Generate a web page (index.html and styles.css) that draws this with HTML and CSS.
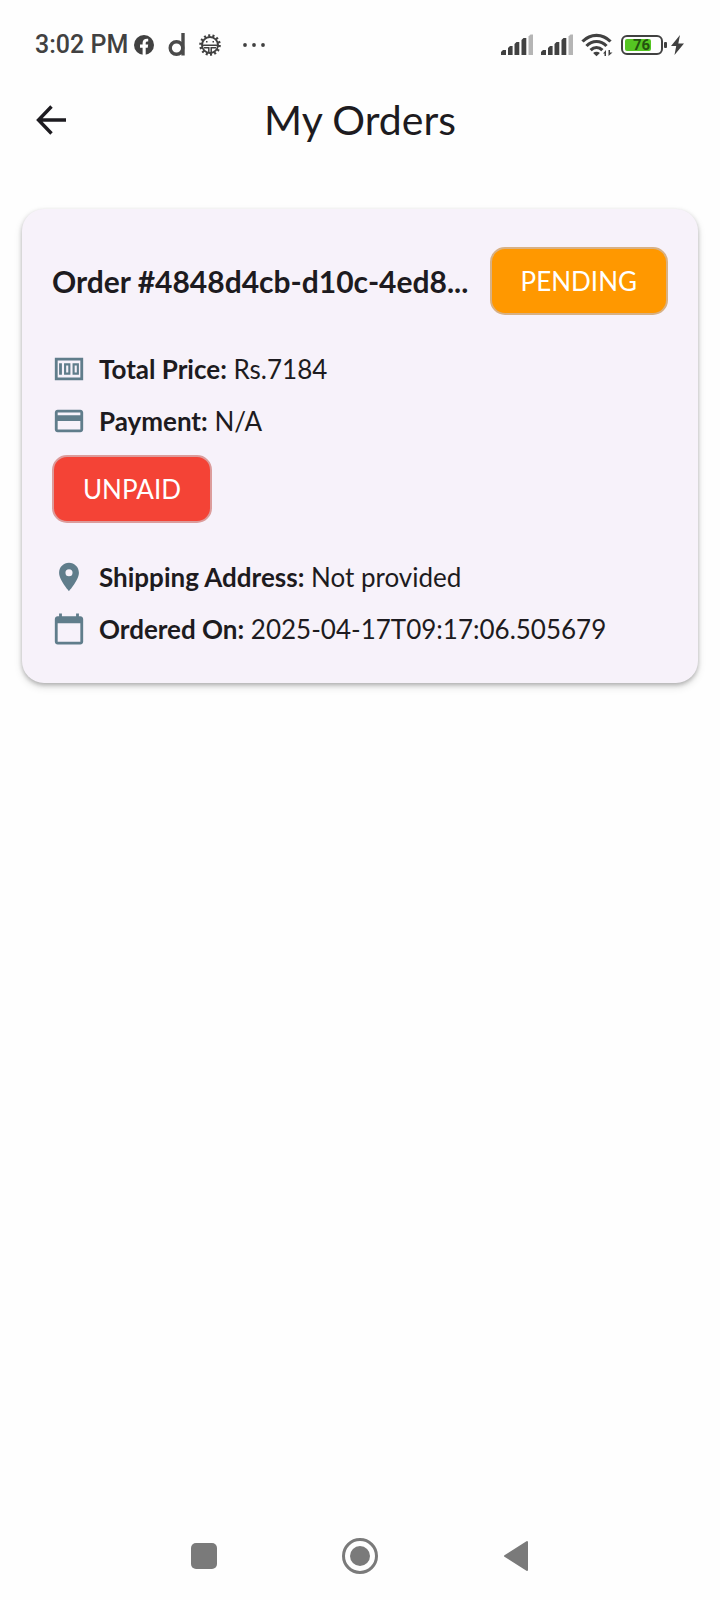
FILE: index.html
```html
<!DOCTYPE html>
<html lang="en">
<head>
<meta charset="utf-8">
<meta name="viewport" content="width=device-width, initial-scale=1">
<title>My Orders</title>
<link rel="stylesheet" href="styles.css">
</head>
<body>
<div class="screen">
  <div class="status-bar">
    <div class="status-left">
      <span class="clock">3:02 PM</span>
      <svg class="icon-fb" viewBox="0 0 20 20" width="20" height="20" aria-hidden="true"><circle cx="10" cy="10" r="10" fill="#414141"/><path d="M8.600 20v-7.200H6V9.600h2.600V8c0-3.100 2-4.600 5.600-4.200v2.700c-1.900-.1-2.500.3-2.500 1.700v1.400h2.500l-.5 3.200h-2V20z" fill="#fff"/></svg>
      <svg class="icon-d" viewBox="0 0 18 26" width="18" height="26" aria-hidden="true" fill="none" stroke="#4a4a4a" stroke-width="3.400"><circle cx="8.500" cy="16" r="6.300"/><path d="M15 1v22.500"/></svg>
      <svg class="icon-gear" viewBox="0 0 24 24" width="24" height="24" aria-hidden="true" fill="none" stroke="#414141"><circle cx="12" cy="12" r="9.300" stroke-width="3" stroke-dasharray="2 2.174"/><circle cx="12" cy="12" r="8" stroke-width="1.900"/><path d="M4 12.200h16M6 14.800h4.800v5.500M18 14.800h-4.800v5.500" stroke-width="1.500"/><path d="M8 8.700h1.500M14.500 8.700H16" stroke-width="1.500"/></svg>
      <svg class="icon-more" viewBox="0 0 24 6" width="24" height="6" aria-hidden="true" fill="#414141"><circle cx="3" cy="3" r="1.900"/><circle cx="12" cy="3" r="1.900"/><circle cx="21" cy="3" r="1.900"/></svg>
    </div>
    <div class="status-right">
      <svg viewBox="0 0 32 21" width="32" height="21" aria-hidden="true" fill="#414141"><path d="M0 21v-3l2-2h3v5zM7 21v-7l2-2h2.600v9zM13.500 21V10l2-2h2.800v13zM20.500 21V6l2-2h2.800v17z"/><path d="M27.500 21V2.500l2-2H32V21z" fill="#b5b5b5"/></svg>
      <svg viewBox="0 0 32 21" width="32" height="21" aria-hidden="true" fill="#414141"><path d="M0 21v-3l2-2h3v5zM7 21v-7l2-2h2.600v9zM13.500 21V10l2-2h2.800v13zM20.500 21V6l2-2h2.800v17z"/><path d="M27.500 21V2.500l2-2H32V21z" fill="#b5b5b5"/></svg>
      <svg viewBox="0 0 32 24" width="32" height="24" aria-hidden="true"><g fill="none" stroke="#414141" stroke-width="3.200"><path d="M1.500 8.500C9.500.3 21.500.3 29.500 8.500"/><path d="M5.500 13c5.800-6 14.200-6 20 0"/><path d="M9.600 17.200c3.500-3.500 8.300-3.500 11.800 0"/></g><path d="M15.500 23.300l-3.400-3.300c1.900-1.700 4.900-1.700 6.800 0z" fill="#414141"/><path d="M25 17v6h-1.500v-2.500H22zM27.500 23v-6H29v2.500h2.500z" fill="#414141"/></svg>
      <span class="battery"><span class="battery-level">76</span></span>
      <svg class="icon-bolt" viewBox="0 0 13 20" width="13" height="20" aria-hidden="true"><path d="M9 0L0 11h5.200L3.500 20 13 8.600H7.300z" fill="#414141"/></svg>
    </div>
  </div>

  <header class="app-bar">
    <button class="back" type="button" aria-label="Back"><svg viewBox="0 0 30 30" width="30" height="30" fill="none" stroke="#1d1b20" stroke-width="3.400"><path d="M15.500 1.500L2.500 15l13 13.500M2.500 15H30"/></svg></button>
    <h1 class="title">My Orders</h1>
  </header>

  <main class="content">
    <article class="card">
      <div class="card-head">
        <h2 class="order-id">Order #4848d4cb-d10c-4ed8...</h2>
        <span class="chip chip-pending">PENDING</span>
      </div>
      <div class="details">
        <p class="row"><svg class="row-icon" viewBox="0 0 24 24" aria-hidden="true"><path d="M2 4v16h20V4zM4 6h16v12H4z" fill-rule="evenodd"/><path d="M5 8h2v8H5zM8.500 8h4.500v8H8.500zm1.500 1.500v5h1.500v-5zM14.500 8H19v8h-4.500zm1.500 1.500v5h1.500v-5z" fill-rule="evenodd"/></svg><span><b>Total Price:</b> Rs.7184</span></p>
        <p class="row"><svg class="row-icon" viewBox="0 0 24 24" aria-hidden="true"><path d="M20 4H4c-1.110 0-1.990.890-1.990 2L2 18c0 1.110.890 2 2 2h16c1.110 0 2-.890 2-2V6c0-1.110-.890-2-2-2zm0 14H4v-6h16v6zm0-10H4V6h16v2z"/></svg><span><b>Payment:</b> N/A</span></p>
        <span class="chip chip-unpaid">UNPAID</span>
      </div>
      <div class="details">
        <p class="row"><svg class="row-icon" viewBox="0 0 24 24" aria-hidden="true"><path d="M12 2C8.130 2 5 5.130 5 9c0 5.250 7 13 7 13s7-7.750 7-13c0-3.870-3.130-7-7-7zm0 9.500a2.500 2.500 0 010-5 2.500 2.500 0 010 5z"/></svg><span><b>Shipping Address:</b> Not provided</span></p>
        <p class="row"><svg class="row-icon" viewBox="0 0 24 24" aria-hidden="true"><path d="M20 3h-1V1h-2v2H7V1H5v2H4c-1.100 0-2 .900-2 2v16c0 1.100.900 2 2 2h16c1.100 0 2-.900 2-2V5c0-1.100-.900-2-2-2zm0 18H4V8h16v13z"/></svg><span><b>Ordered On:</b> 2025-04-17T09:17:06.505679</span></p>
      </div>
    </article>
  </main>

  <nav class="nav-bar" aria-label="System">
    <button class="nav-button" type="button" aria-label="Recent apps"><svg viewBox="0 0 36 36" width="36" height="36"><rect x="5" y="5" width="26" height="26" rx="5" fill="#7a7a7a"/></svg></button>
    <button class="nav-button" type="button" aria-label="Home"><svg viewBox="0 0 36 36" width="36" height="36"><circle cx="18" cy="18" r="16.500" fill="none" stroke="#7a7a7a" stroke-width="3"/><circle cx="18" cy="18" r="10" fill="#7a7a7a"/></svg></button>
    <button class="nav-button" type="button" aria-label="Back"><svg viewBox="0 0 36 36" width="36" height="36"><path d="M7 18L29 4v28z" fill="#7a7a7a" stroke="#7a7a7a" stroke-width="2" stroke-linejoin="round"/></svg></button>
  </nav>
</div>
</body>
</html>
```

FILE: styles.css
```css
* {
  box-sizing: border-box;
}

body {
  margin: 0;
  background: #fefefe;
  color: #1d1b20;
  font-family: Lato, "Liberation Sans", sans-serif;
}

h1,
h2,
p {
  margin: 0;
  font-weight: 400;
}

button {
  display: flex;
  align-items: center;
  justify-content: center;
  padding: 0;
  border: 0;
  background: none;
}

svg {
  display: block;
  flex: none;
}

.screen {
  display: flex;
  flex-direction: column;
  min-height: 100vh;
}

.status-bar {
  display: flex;
  align-items: center;
  justify-content: space-between;
  padding: 27px 36px 0 35px;
}

.status-left,
.status-right {
  display: flex;
  align-items: center;
  height: 35px;
}

.clock {
  color: #414141;
  font: 500 25px/35px Roboto, sans-serif;
}

.icon-fb {
  margin-left: 6px;
}

.icon-d {
  margin-left: 14px;
}

.icon-gear {
  margin-left: 12px;
}

.icon-more {
  margin-left: 20px;
}

.status-right {
  gap: 8px;
}

.battery {
  position: relative;
  width: 42px;
  height: 20px;
  padding: 2px;
  border: 2px solid #414141;
  border-radius: 6px;
}

.battery::after {
  content: "";
  position: absolute;
  top: 5px;
  right: -6px;
  width: 3px;
  height: 6px;
  border-radius: 1px;
  background: #414141;
}

.battery-level {
  display: block;
  width: 26px;
  height: 12px;
  padding-left: 8px;
  border-radius: 2px;
  background: #55c522;
  color: #24520f;
  font: 700 15px/13px Roboto, sans-serif;
}

.app-bar {
  display: grid;
  grid-template-columns: 60px 1fr 60px;
  align-items: center;
  height: 116px;
  padding: 0 21px;
}

.back {
  width: 60px;
  height: 60px;
}

.title {
  font-size: 41px;
  line-height: 52px;
  text-align: center;
}

.content {
  flex: 1;
  padding: 31px 22px;
}

.card {
  padding: 38px 30px 36px;
  border-radius: 22px;
  background: #f7f2fa;
  box-shadow: 0 2px 4px rgba(0, 0, 0, 0.24), 0 4px 8px rgba(0, 0, 0, 0.12);
}

.card-head {
  display: flex;
  align-items: center;
  justify-content: space-between;
  gap: 16px;
}

.order-id {
  font-size: 30px;
  font-weight: 700;
  line-height: 40px;
}

.chip {
  display: inline-block;
  padding: 14px 29px;
  border: 2px solid;
  border-radius: 15px;
  color: #fff;
  font-size: 26px;
  line-height: 36px;
}

.chip-pending {
  border-color: #d8b184;
  background-color: #ff9800;
}

.chip-unpaid {
  border-color: #dc9c9b;
  background-color: #f44336;
}

.details {
  display: flex;
  flex-direction: column;
  align-items: flex-start;
  gap: 16px;
  margin-top: 36px;
}

.row {
  display: flex;
  align-items: center;
  gap: 13px;
  font-size: 26px;
  line-height: 36px;
}

.row b {
  font-weight: 700;
}

.row-icon {
  width: 34px;
  height: 34px;
  fill: #607d8b;
}

.nav-bar {
  display: flex;
  justify-content: center;
  gap: 96px;
  padding: 14px 0;
}

.nav-button {
  width: 60px;
  height: 60px;
}
```
